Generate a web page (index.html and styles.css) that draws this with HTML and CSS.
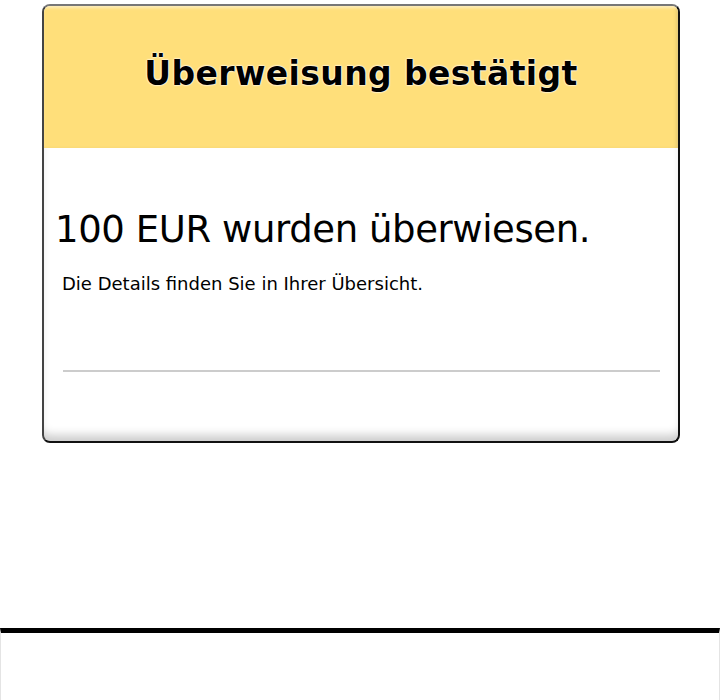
FILE: index.html
```html
<!DOCTYPE html>
<html lang="de">
<head>
    <meta charset="UTF-8">
    <title>Überweisung bestätigt</title>
    <meta name="viewport" content="width=device-width, initial-scale=1.0">
    <link rel="stylesheet" href="styles.css">
</head>
<body>
    <div class="page">
        <div class="card">
            <div class="card-head">
                <h1 class="card-title">Überweisung bestätigt</h1>
            </div>
            <div class="card-body">
                <p class="amount">100 EUR wurden überwiesen.</p>
                <p class="note">Die Details finden Sie in Ihrer Übersicht.</p>
                <hr class="divider">
            </div>
        </div>
    </div>
    <div class="footer-bar"></div>
</body>
</html>
```

FILE: styles.css
```css
body, html {
    margin: 0; padding: 0; background: #fff; color: #000;
    font-family: 'DejaVu Sans', 'Liberation Sans', sans-serif;
}
.page { padding: 4px 40px 0 42px; height: 628px; box-sizing: border-box; }
.card {
    width: 638px; height: 439px; box-sizing: border-box;
    border: 2px solid #111; border-top-color: #777; border-left-color: #444;
    border-radius: 8px; overflow: hidden; background: #fff;
    box-shadow: inset 0 -10px 10px -4px rgba(0,0,0,0.2);
    display: flex; flex-direction: column;
}
.card-head {
    height: 142px; background: #ffdf7a; display: flex; align-items: center; justify-content: center;
    box-shadow: inset 0 3px 3px -1px rgba(255,255,255,0.5), inset -3px 0 4px -2px rgba(0,0,0,0.15);
}
.card-title {
    margin: 0; font-size: 33px; font-weight: 700; padding-bottom: 8px; letter-spacing: 0.4px;
    text-shadow: 0 0 2px #fff, 0 0 2px #fff, 0 0 1px #fff;
}
.card-body { padding: 58px 18px 0 11px; }
.amount { margin: 0; font-size: 37px; line-height: 48px; letter-spacing: -0.4px; }
.note { margin: 18px 0 0 7px; font-size: 18px; line-height: 24px; }
.divider { margin: 74px 0 0 8px; border: none; border-top: 2px solid #ccc; }
.footer-bar {
    height: 72px; border-top: 5px solid #000; box-sizing: border-box;
    border-left: 1px solid #e4e4e4; border-right: 1px solid #e4e4e4;
}
```
